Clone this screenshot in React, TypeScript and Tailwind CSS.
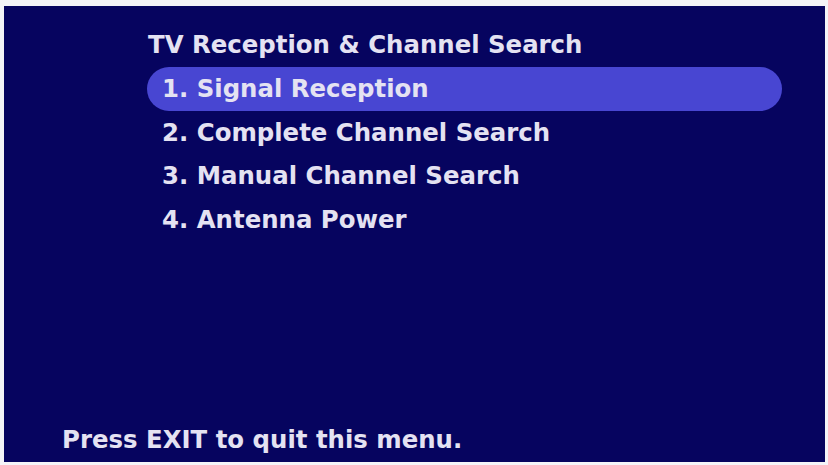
export default function App() {
  const items = [
    "1. Signal Reception",
    "2. Complete Channel Search",
    "3. Manual Channel Search",
    "4. Antenna Power",
  ];
  return (
    <div className="w-[828px] h-[465px] bg-[#f4f4f8] pt-[6px] pl-[4px] pr-[3px] pb-[3px]">
      <div
        className="w-full h-full bg-[#06045f] text-[#e4e2f2] flex flex-col"
        style={{ fontFamily: '"DejaVu Sans", sans-serif' }}
      >
        <div className="pl-[144px] pt-[24px] text-[24.4px] font-bold leading-[30px] h-[61px]">
          TV Reception &amp; Channel Search
        </div>
        <div className="flex flex-col">
          {items.map((t, i) => (
            <div
              key={t}
              className={
                "ml-[143px] mr-[43px] h-[43.5px] flex items-center pl-[15px] pt-[2px] text-[24.4px] font-bold rounded-full " +
                (i === 0 ? "bg-[#4846d2]" : "")
              }
            >
              {t}
            </div>
          ))}
        </div>
        <div className="flex-1" />
        <div className="pl-[58px] pb-[7px] text-[24.4px] font-bold leading-[30px]">
          Press EXIT to quit this menu.
        </div>
      </div>
    </div>
  );
}
